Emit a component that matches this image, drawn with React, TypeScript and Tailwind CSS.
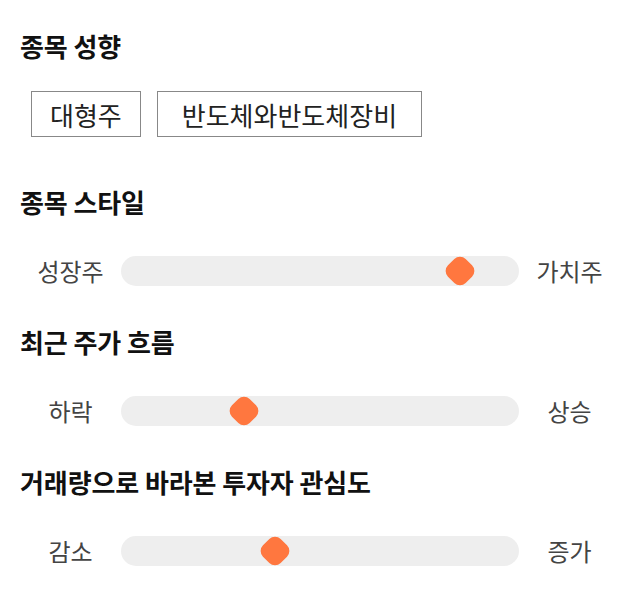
import React from "react";

const font = { fontFamily: '"Noto Sans CJK KR", "Noto Sans", sans-serif' };

function Heading({ children }: { children: React.ReactNode }) {
  return (
    <h2 className="h-[30px] leading-[30px] text-[26px] font-bold text-[#111111] tracking-[-0.1px]">
      {children}
    </h2>
  );
}

function Slider({ left, right, pos }: { left: string; right: string; pos: number }) {
  return (
    <div className="flex items-center h-[30px]">
      <div className="w-[101px] text-center text-[24px] text-[#444444] leading-[30px]">{left}</div>
      <div className="relative flex-1 h-[30px] rounded-full bg-[#eeeeee]">
        <div
          className="absolute top-1/2 w-[25px] h-[25px] -translate-x-1/2 -translate-y-1/2 rotate-45 rounded-[8px] bg-[#ff773f]"
          style={{ left: `${pos}%` }}
        />
      </div>
      <div className="w-[101px] text-center text-[24px] text-[#444444] leading-[30px]">{right}</div>
    </div>
  );
}

export default function App() {
  return (
    <div className="w-[640px] h-[606px] bg-white px-5 pt-[31px]" style={font}>
      <Heading>종목 성향</Heading>
      <div className="flex gap-4 mt-[30px] ml-[11px]">
        <div className="h-[46px] px-[18px] border border-[#888888] flex items-center text-[26px] text-[#222222]">
          대형주
        </div>
        <div className="h-[46px] px-[24px] border border-[#888888] flex items-center text-[26px] text-[#222222]">
          반도체와반도체장비
        </div>
      </div>

      <div className="mt-[50px]">
        <Heading>종목 스타일</Heading>
      </div>
      <div className="mt-[39px]">
        <Slider left="성장주" right="가치주" pos={85.2} />
      </div>

      <div className="mt-[41px]">
        <Heading>최근 주가 흐름</Heading>
      </div>
      <div className="mt-[39px]">
        <Slider left="하락" right="상승" pos={30.8} />
      </div>

      <div className="mt-[41px]">
        <Heading>거래량으로 바라본 투자자 관심도</Heading>
      </div>
      <div className="mt-[39px]">
        <Slider left="감소" right="증가" pos={38.8} />
      </div>
    </div>
  );
}
